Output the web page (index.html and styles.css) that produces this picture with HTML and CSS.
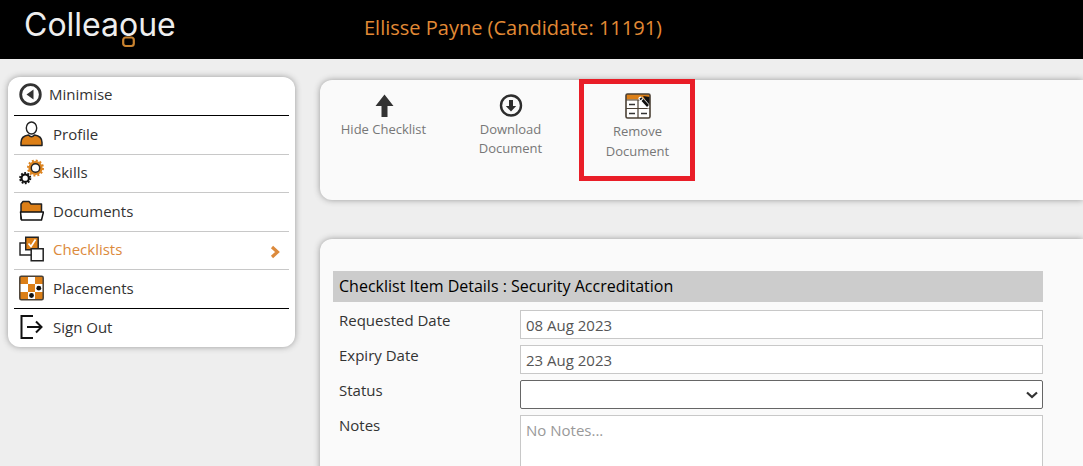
FILE: index.html
```html
<!DOCTYPE html>
<html lang="en">
<head>
<meta charset="utf-8">
<title>Colleague</title>
<link rel="stylesheet" href="styles.css">
</head>
<body>
<header class="topbar">
  <div class="logo" aria-label="Colleague">Collea<span class="logo-g">o<svg class="logo-tail" width="13" height="12" viewBox="0 0 13 12" aria-hidden="true"><rect x="1.2" y="1.5" width="10.6" height="8.5" rx="2.5" fill="none" stroke="#c9832f" stroke-width="2.2"/></svg></span>ue</div>
  <h1 class="title">Ellisse Payne (Candidate: 11191)</h1>
</header>
<div class="shell">
  <nav class="sidebar">
    <button class="minimise" type="button">
      <svg width="23" height="23" viewBox="0 0 23 23"><circle cx="11.5" cy="11.5" r="9.800" fill="#fff" stroke="#333" stroke-width="2.800"/><path d="M14.500 6.500v10L7.500 11.500z" fill="#333"/></svg>
      Minimise
    </button>
    <ul class="menu">
      <li><a href="#"><svg width="25" height="26" viewBox="0 0 25 26"><ellipse cx="12.500" cy="7" rx="5.200" ry="6" fill="#fff" stroke="#222" stroke-width="1.400"/><path d="M2 24.500v-3q0-6.500 7.500-7.500 3 3.500 6 0 7.500 1 7.500 7.500v3z" fill="#dc7f17" stroke="#222" stroke-width="1.500" stroke-linejoin="round"/></svg>Profile</a></li>
      <li><a href="#"><svg width="25" height="26" viewBox="0 0 25 26"><circle cx="16.500" cy="9" r="7.500" fill="none" stroke="#dc8420" stroke-width="2" stroke-dasharray="2 1.930"/><circle cx="16.500" cy="9" r="5.600" fill="#fff" stroke="#dc8420" stroke-width="3"/><circle cx="16.500" cy="9" r="4.200" fill="#fff" stroke="#222" stroke-width="1.400"/><circle cx="6.200" cy="19.200" r="5.200" fill="none" stroke="#111" stroke-width="1.800" stroke-dasharray="1.800 1.467"/><circle cx="6.200" cy="19.200" r="3.700" fill="#fff" stroke="#111" stroke-width="2.200"/></svg>Skills</a></li>
      <li><a href="#"><svg width="25" height="26" viewBox="0 0 25 26"><path d="M2 21V6l2-2.500h6L12 6h10.500v9z" fill="#dc7f17" stroke="#222" stroke-width="1.500" stroke-linejoin="round"/><path d="M1.500 14h23L22.500 22H2.500z" fill="#fff" stroke="#111" stroke-width="1.500" stroke-linejoin="round"/></svg>Documents</a></li>
      <li class="current"><a href="#" aria-current="page"><svg width="25" height="26" viewBox="0 0 25 26"><path d="M1 7h12v12H1z" fill="#fff" stroke="#222" stroke-width="1.400"/><path d="M6.700 1.200h12.500v12.500H6.700z" fill="#dc7f17" stroke="#222" stroke-width="1.400"/><path d="m9.500 7.500 2.500 3 4.500-7" fill="none" stroke="#fff" stroke-width="1.700"/><path d="M12.200 12.700h12v12h-12z" fill="#fff" stroke="#222" stroke-width="1.500"/></svg>Checklists<svg class="chevron" width="10" height="14" viewBox="0 0 10 14"><path d="m2 2 5.500 5L2 12" fill="none" stroke="#dc8a3c" stroke-width="3.200"/></svg></a></li>
      <li><a href="#"><svg width="25" height="26" viewBox="0 0 25 26"><rect x=".8" y="1.300" width="23.400" height="23.400" rx="1.500" fill="#fff"/><path d="M1 2h8v7H1zM16 2h8v7h-8zM9 9h7v8H9zM1 17h8v7H1zM16 17h8v7h-8z" fill="#dc7f17"/><path d="M16 9h8v8h-8zM9 17h7v7H9z" fill="#fff"/><circle cx="19.800" cy="13.200" r="2.400" fill="#111"/><circle cx="12.500" cy="20.500" r="2.400" fill="#111"/><rect x=".8" y="1.300" width="23.400" height="23.400" rx="1.500" fill="none" stroke="#4a4035" stroke-width="1.500"/></svg>Placements</a></li>
      <li><a href="#"><svg width="25" height="26" viewBox="0 0 25 26"><path d="M14 2H2.500v22H14M8 13h14.500M17 7.500l5.500 5.500-5.500 5.500" fill="none" stroke="#111" stroke-width="2"/></svg>Sign Out</a></li>
    </ul>
  </nav>
  <main class="content">
    <section class="panel toolbar">
      <button class="tool" type="button">
        <svg width="24" height="25" viewBox="0 0 24 25"><path d="M12.500 1.500 21.500 13H15.500v11h-6V13H3.500z" fill="#333"/></svg>
        <span>Hide Checklist</span>
      </button>
      <button class="tool" type="button">
        <svg width="24" height="25" viewBox="0 0 24 25"><circle cx="12" cy="12.500" r="10" fill="none" stroke="#2d2d2d" stroke-width="2.400"/><path d="M10 7h4v6h3.200L12 18.500 6.800 13H10z" fill="#2d2d2d"/></svg>
        <span>Download<br>Document</span>
      </button>
      <button class="tool marked" type="button">
        <svg width="26" height="26" viewBox="0 0 26 26"><rect x="1" y="1" width="24" height="24" rx="1.500" fill="#fff"/><path d="M1 1h24v5.500H1z" fill="#dc7f17"/><path d="M1 7h24M1 15.500h24M13 7v18" stroke="#4a4035" stroke-width="1.200"/><path d="M4 11.500h6M4 20.500h6M16 20.500h6" stroke="#333" stroke-width="1.700"/><path d="m18 3 7 1v10z" fill="#111"/><path d="m15.500 5.500 8 8" stroke="#fff" stroke-width="4" stroke-linecap="round"/><path d="m15.500 5 1 1.500M17.500 7l5.500 6" stroke="#111" stroke-width="2.600"/><rect x="1" y="1" width="24" height="24" rx="1.500" fill="none" stroke="#4a4035" stroke-width="1.600"/></svg>
        <span>Remove<br>Document</span>
      </button>
    </section>
    <section class="panel details">
      <h2 class="bar">Checklist Item Details : Security Accreditation</h2>
      <form class="fields">
        <label for="requested">Requested Date</label>
        <input id="requested" type="text" value="08 Aug 2023">
        <label for="expiry">Expiry Date</label>
        <input id="expiry" type="text" value="23 Aug 2023">
        <label for="status">Status</label>
        <div class="select">
          <select id="status"><option></option></select>
          <svg class="arrow" width="12" height="8" viewBox="0 0 12 8"><path d="m1 1.500 5 4.500 5-4.500" fill="none" stroke="#333" stroke-width="2.200"/></svg>
        </div>
        <label for="notes">Notes</label>
        <textarea id="notes" rows="4" placeholder="No Notes..."></textarea>
      </form>
    </section>
  </main>
</div>
</body>
</html>
```
FILE: styles.css
```css
*, *::after { box-sizing: border-box; }

body {
  margin: 0;
  height: 100vh;
  overflow: hidden;
  background: #eee;
  color: #333;
  font: 15px/20px "Open Sans", "Noto Sans", sans-serif;
}

button, input, select, textarea { font: inherit; color: inherit; }
button { border: 0; background: none; }
svg { flex: none; }

.topbar {
  display: flex;
  align-items: center;
  height: 59px;
  padding: 0 24px 4px;
  background: #000;
}

.logo {
  width: 340px;
  padding-bottom: 6px;
  color: #eee;
  font: 400 32px/40px Inter, sans-serif;
}

.logo-g { position: relative; }

.logo-tail {
  position: absolute;
  left: 3px;
  bottom: -4px;
}

.title {
  margin: 0;
  color: #e28a35;
  font-size: 20px;
  font-weight: 400;
  line-height: 28px;
}

.shell {
  display: grid;
  grid-template-columns: 287px minmax(0, 1fr);
  align-items: start;
  column-gap: 25px;
  padding: 18px 0 0 8px;
}

.sidebar {
  padding: 0 6px;
  border-radius: 12px;
  background: #fff;
  box-shadow: 0 0 6px #999;
}

.minimise {
  display: flex;
  align-items: center;
  gap: 7px;
  width: 100%;
  height: 38px;
  padding: 0 5px 4px;
}

.menu {
  display: grid;
  grid-auto-rows: 1fr;
  height: 232px;
  margin: 0;
  padding: 0;
  border-top: 1px solid #000;
  list-style: none;
}

.menu li { border-bottom: 1px solid #c8c8c8; }
.menu li:nth-child(5) { border-bottom-color: #000; }
.menu li:last-child { border-bottom: 0; }

.menu a {
  display: flex;
  align-items: center;
  gap: 9px;
  height: 100%;
  padding: 0 9px 2px 5px;
  color: inherit;
  text-decoration: none;
}

.menu .current a { color: #dc8a3c; }
.chevron { margin: 6px 0 0 auto; }

.content {
  display: grid;
  gap: 39px;
  padding-top: 3px;
}

.panel {
  border-radius: 12px 0 0 12px;
  background: #fafafa;
  box-shadow: 0 0 6px #999;
}

.toolbar {
  display: flex;
  align-items: flex-start;
  height: 120px;
}

.tool {
  position: relative;
  display: flex;
  flex-direction: column;
  align-items: center;
  gap: 2px;
  width: 127px;
  padding: 13px 0 0;
  color: #777;
  font-size: 13px;
  line-height: 19px;
}

.marked {
  line-height: 20px;
}

.marked::after {
  content: "";
  position: absolute;
  inset: -1px 6px auto 5px;
  height: 102px;
  border: 5px solid #e91d27;
}

.details { padding: 32px 40px 24px 13px; }

.bar {
  margin: 0 0 8px;
  padding: 5px 6px 6px;
  background: #ccc;
  color: #000;
  font-size: 16px;
  font-weight: 400;
  line-height: 20px;
}

.fields {
  display: grid;
  grid-template-columns: 181px minmax(0, 1fr);
  row-gap: 6px;
  padding-left: 6px;
}

.fields input, .fields select, .fields textarea {
  display: block;
  width: 100%;
  height: 29px;
  margin: 0;
  padding: 1px 5px 0;
  border: 1px solid #c8c8c8;
  border-radius: 0;
  background: #fff;
  color: #555;
}

.fields textarea {
  height: 96px;
  padding-top: 4px;
  resize: none;
}

.fields textarea::placeholder { color: #999; }

.select { position: relative; }

.fields select {
  appearance: none;
  border-color: #666;
  border-radius: 2px;
}

.arrow {
  position: absolute;
  top: 11px;
  right: 5px;
  pointer-events: none;
}
```
